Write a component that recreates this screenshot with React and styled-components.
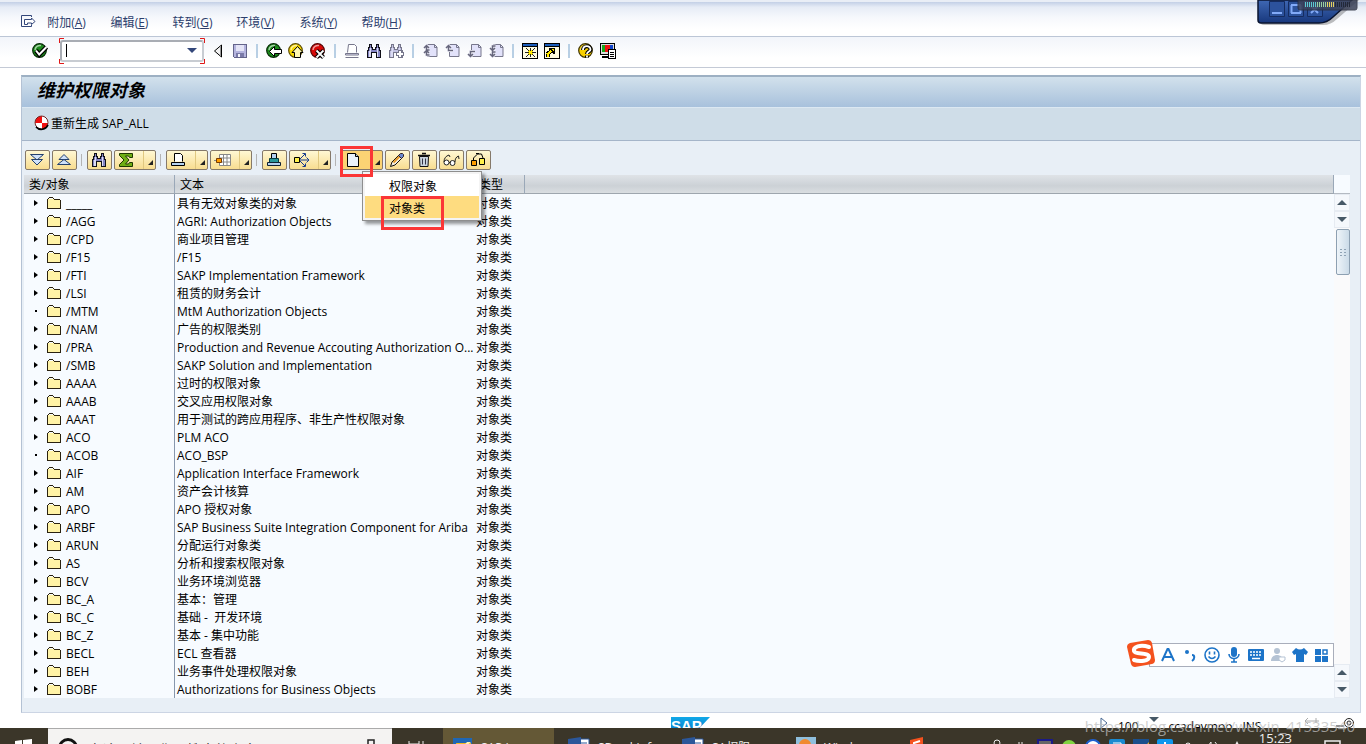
import React, { useState } from 'react'
import styled, { createGlobalStyle } from 'styled-components'

const treeData = [
  { id: '_____', text: '具有无效对象类的对象' },
  { id: '/AGG', text: 'AGRI: Authorization Objects' },
  { id: '/CPD', text: '商业项目管理' },
  { id: '/F15', text: '/F15' },
  { id: '/FTI', text: 'SAKP Implementation Framework' },
  { id: '/LSI', text: '租赁的财务会计' },
  { id: '/MTM', text: 'MtM Authorization Objects', leaf: true },
  { id: '/NAM', text: '广告的权限类别' },
  { id: '/PRA', text: 'Production and Revenue Accouting Authorization O...' },
  { id: '/SMB', text: 'SAKP Solution and Implementation' },
  { id: 'AAAA', text: '过时的权限对象' },
  { id: 'AAAB', text: '交叉应用权限对象' },
  { id: 'AAAT', text: '用于测试的跨应用程序、非生产性权限对象' },
  { id: 'ACO', text: 'PLM ACO' },
  { id: 'ACOB', text: 'ACO_BSP', leaf: true },
  { id: 'AIF', text: 'Application Interface Framework' },
  { id: 'AM', text: '资产会计核算' },
  { id: 'APO', text: 'APO 授权对象' },
  { id: 'ARBF', text: 'SAP Business Suite Integration Component for Ariba' },
  { id: 'ARUN', text: '分配运行对象类' },
  { id: 'AS', text: '分析和搜索权限对象' },
  { id: 'BCV', text: '业务环境浏览器' },
  { id: 'BC_A', text: '基本：管理' },
  { id: 'BC_C', text: '基础 -  开发环境' },
  { id: 'BC_Z', text: '基本 - 集中功能' },
  { id: 'BECL', text: 'ECL 查看器' },
  { id: 'BEH', text: '业务事件处理权限对象' },
  { id: 'BOBF', text: 'Authorizations for Business Objects' },
]

const menuItems = [
  { title: '附加', hot: 'A' },
  { title: '编辑', hot: 'E' },
  { title: '转到', hot: 'G' },
  { title: '环境', hot: 'V' },
  { title: '系统', hot: 'Y' },
  { title: '帮助', hot: 'H' },
]

const Svg = ({ w = 16, h = 16, children, ...rest }) => (
  <svg width={w} height={h} viewBox={`0 0 ${w} ${h}`} fill="none" aria-hidden="true" {...rest}>
    {children}
  </svg>
)

const Ball = ({ fill, dark, children }) => (
  <Svg>
    <circle cx="7.500" cy="7.500" r="6.800" fill={fill} stroke={dark} strokeWidth="1.200" />
    <path d="M3 7A5 5 0 0 1 9 2.500" stroke="#fff" strokeOpacity=".6" strokeWidth="1.500" />
    {children}
  </Svg>
)

const CheckIcon = () => (
  <Ball fill="#1c8a1c" dark="#032803">
    <path d="M4 7.500l3.200 4L14.500 4" stroke="#000" strokeWidth="4.500" />
    <path d="M4 7.500l3.200 4L14.500 4" stroke="#fff" strokeWidth="2" />
  </Ball>
)
const BackIcon = () => (
  <Ball fill="#1c8a1c" dark="#032803">
    <path d="M3.500 8.500l5-5V6.500h7v4h-7v3z" fill="#fff" stroke="#000" />
  </Ball>
)
const ExitIcon = () => (
  <Ball fill="#f8d800" dark="#5d4c00">
    <path d="M9.500 3.500l5.500 6h-2.500v5h-6v-5H4z" fill="#fff7b0" stroke="#000" />
  </Ball>
)
const CancelIcon = () => (
  <Ball fill="#d80808" dark="#500">
    <path d="M6.500 7.500l7 7M13.500 7.500l-7 7" stroke="#000" strokeWidth="4" />
    <path d="M6.500 7.500l7 7M13.500 7.500l-7 7" stroke="#fff" strokeWidth="1.800" />
  </Ball>
)
const HelpIcon = () => (
  <Ball fill="#f8d000" dark="#3d3200">
    <path d="M5 7c0-5 7.500-5 7.500-.5 0 2-3.500 2-3.500 4.500M9 12.500v2" stroke="#000" strokeWidth="4" />
    <path d="M5 7c0-5 7.500-5 7.500-.5 0 2-3.500 2-3.500 4.500M9 12.500v2" stroke="#fff" strokeWidth="1.800" />
  </Ball>
)
const PrevIcon = () => (
  <Svg>
    <path d="M11.500 2v12L4.500 8z" fill="#f2f2f2" stroke="#000" />
    <path d="M10.500 4v8" stroke="#999" />
  </Svg>
)
const SaveIcon = () => (
  <Svg shapeRendering="crispEdges">
    <path d="M1.500 1.500h13v13h-12l-1-1z" fill="#b4b4de" stroke="#63638a" />
    <path d="M4 2h8v6H4z" fill="#e4e4f6" />
    <path d="M4 10h8v4H4z" fill="#7a7aa8" />
    <path d="M6 11h2v3H6z" fill="#f3f3fb" />
  </Svg>
)
const PrintIcon = () => (
  <Svg>
    <path d="M3.500 9.500l1-8h6l2 2v6" fill="#fff" stroke="#77778c" />
    <path d="M1.500 10.500h13v1.500h-13z" fill="#e6e6f8" stroke="#77778c" />
    <path d="M1.500 14.500h13" stroke="#77778c" />
  </Svg>
)
const FindIcon = ({ c = '#101018', f = '#8585c4', plus }) => (
  <Svg shapeRendering="crispEdges">
    <path
      d="M3.500 1.500h2v3h1v2h3v-2h1v-3h2v3h1v3h1v7h-4v-5h-5v5h-4v-7h1v-3h1z"
      fill={f}
      stroke={c}
    />
    <path d="M4 5h1v9H3V8h1zM12 5h-1v9h1z" fill="#dcdcf4" />
    {plus && <path d="M10.500 7.500h3v2h2v3h-2v2h-3v-2h-2v-3h2z" fill="#fff" stroke={c} />}
  </Svg>
)
const PageIcon = ({ arrow }) => (
  <Svg>
    <path d="M5.500 1.500h7l2.500 2.500v9.500H5.500z" fill="#e2e2fa" stroke="#77778c" />
    <path d="M12.500 1.500v3H15" stroke="#77778c" />
    <path d={arrow} stroke="#f4f4fc" strokeWidth="3" />
    <path d={arrow} stroke="#66667c" strokeWidth="1.500" />
  </Svg>
)
const SessionIcon = ({ link }) => (
  <Svg shapeRendering="crispEdges">
    <path d="M0 0h16v16H0z" fill="#000" />
    <path d="M1 1h14v2H1z" fill="#1c5dbb" />
    <path d="M1 4h14v11H1z" fill="#fffce0" />
    {link ? (
      <>
        <path d="M3.500 14v-3l4-3" stroke="#000" strokeWidth="4" />
        <path d="M5 5h6v6H9L5 7z" fill="#000" />
        <path d="M3.500 14v-3l4-3" stroke="#ffe800" strokeWidth="2" />
        <path d="M7 6h3v3z" fill="#ffe800" />
      </>
    ) : (
      <>
        <path d="M6 7h5v5H6z" fill="#ffe800" />
        <path d="M8.500 5v3M8.500 11v3M3 9.500h4M10 9.500h4M4 5l3 3M13 5l-3 3M4 14l3-3M13 14l-3-3" stroke="#222" />
      </>
    )}
  </Svg>
)
const LayoutIcon = () => (
  <Svg shapeRendering="crispEdges">
    <path d="M.5.500h14v11H.5zM2.500 13.500h11v1h-11z" fill="#ddd" stroke="#000" />
    <path d="M2 2h4v7H2z" fill="#18a818" />
    <path d="M5 2h5v7H5z" fill="#e11" />
    <path d="M10 2h3v5h-3z" fill="#14c" />
    <path d="M8.500 6.500h7v9h-7z" fill="#fff" stroke="#000" />
    <path d="M10 9.500h4M10 11.500h4M10 13.500h4" stroke="#000" />
  </Svg>
)
const MenuIcon = () => (
  <Svg>
    <path d="M11.500 3V1.500h-10v11h10V11" stroke="#33477a" />
    <path d="M4.500 5.500h7V4l3.500 3.500-3.500 3V9h-4v1.500h-3z" fill="#fff" stroke="#33477a" />
  </Svg>
)
const GenerateIcon = () => (
  <Svg>
    <circle cx="7.500" cy="7.500" r="7" fill="#fff" />
    <path d="M8 8V1a7 7 0 0 0-7 7zM8 8v6.500a7 7 0 0 0 6-6.500z" fill="#f01010" />
    <circle cx="7.500" cy="7.500" r="6.500" stroke="#6b2020" />
    <path d="M2 12a7.200 7.200 0 0 0 12-2" stroke="#000" strokeWidth="1.600" />
  </Svg>
)
const ExpandIcon = () => (
  <Svg>
    <path d="M1.500 2.500h13L8 8z" fill="#cfe1fa" stroke="#24406c" />
    <path d="M2.500 7.500h11L8 13z" fill="#cfe1fa" stroke="#24406c" />
  </Svg>
)
const CollapseIcon = () => (
  <Svg>
    <path d="M8 2.500l5 5H3z" fill="#cfe1fa" stroke="#24406c" />
    <path d="M8 7.500l6.500 5h-13z" fill="#cfe1fa" stroke="#24406c" />
  </Svg>
)
const SumIcon = () => (
  <Svg>
    <path d="M1.500 1.500h13v4h-3l-1-1.500h-3l3.500 4-3.500 4h3l1-1.500h3v4h-13v-2l4.500-4.500-4.500-4.500z" fill="#6fae14" stroke="#1d3a00" />
  </Svg>
)
const PrinterIcon = () => (
  <Svg>
    <path d="M4.500 9.500v-8h6l2 2v6" fill="#fff" stroke="#000" />
    <path d="M1.500 10.500h13v3h-13z" fill="#b5d2f0" stroke="#000" />
  </Svg>
)
const GridIcon = () => (
  <Svg w={18}>
    <path d="M5.500 2.500h11v11h-11zM5.500 6h11M5.500 10h11M9.500 2.500v11M13 2.500v11" fill="#fff" stroke="#888" />
    <path d="M2.500 6.500h5v4h-5z" fill="#ff9d00" stroke="#7a3b00" />
    <path d="M0 8.500h2" stroke="#888" />
  </Svg>
)
const StampIcon = () => (
  <Svg>
    <path d="M5.500 1.500h5v5h-5z" fill="#b5d2f0" stroke="#000" />
    <path d="M3.500 6.500h9v4h-9z" fill="#29979a" stroke="#053c40" />
    <path d="M1.500 10.500h13v3h-13z" fill="#b5d2f0" stroke="#123" />
  </Svg>
)
const SpreadIcon = () => (
  <Svg w={18}>
    <path d="M1.500 5.500h5v5h-5z" fill="#fff04a" stroke="#000" />
    <path d="M7 8h9M7 7l5-5M7 9l5 5" stroke="#173a8c" />
    <path d="M13.500 5.500L16 8l-2.500 2.500M9.500 1.500h3v3M9.500 14.500h3v-3" stroke="#173a8c" />
  </Svg>
)
const NewIcon = () => (
  <Svg>
    <path d="M2.500 1.500h8l3 3v10h-11z" fill="#eaf2fb" stroke="#000" />
    <path d="M10.500 1.500v3h3" stroke="#000" fill="#bcd" />
  </Svg>
)
const PencilIcon = () => (
  <Svg>
    <path d="M1.500 14.500l1.500-4.500 7.500-7.500 3 3L6 13z" fill="#f6efe0" stroke="#111" />
    <path d="M4.500 10.500l6-6" stroke="#e79a28" strokeWidth="2" />
    <path d="M9.500 3.500l3 3 2-2v-2l-1-1h-2z" fill="#6a88d0" stroke="#322" />
  </Svg>
)
const TrashIcon = () => (
  <Svg>
    <path d="M3.500 4.500h9l-.5 10H4z" fill="#c8d3de" stroke="#111" />
    <path d="M2 3.500h12M6 1.500h4" stroke="#111" strokeWidth="1.400" />
    <path d="M6.500 6.500v6M9.500 6.500v6" stroke="#334" />
  </Svg>
)
const GlassesIcon = () => (
  <Svg w={18}>
    <circle cx="4.500" cy="10.500" r="2.500" fill="#fff" stroke="#222" />
    <circle cx="10.500" cy="11" r="2.500" fill="#fff" stroke="#222" />
    <path d="M2 10c0-4 2-6 5-7l1 2M13 10c0-3 1-5 3.500-6l.5 3M7 10.500h1.500" stroke="#222" />
  </Svg>
)
const WhereUsedIcon = () => (
  <Svg w={18}>
    <path d="M4.500 8V6l4-4h4l1.500 4M7 1.500h3" stroke="#000" />
    <path d="M2.500 8.500h5v5h-5z" fill="#ff9d00" stroke="#000" />
    <path d="M10.500 6.500h5v6h-5z" fill="#fff04a" stroke="#000" />
  </Svg>
)
const FolderIcon = () => (
  <Svg w={15} h={12} shapeRendering="crispEdges">
    <path d="M1 2h6v1h6v8H1z" fill="#fff3a6" />
    <path d="M0 2h1v9H0zM1 1h1v1H1zM2 0h4v1H2zM6 1h1v1H6zM7 2h6v1H7zM13 3h1v8h-1zM0 11h14v1H0z" fill="#2a2210" />
  </Svg>
)
const Triangle = ({ up }) => (
  <Svg w={10} h={6}>
    <path d={up ? 'M5 0l5 5H0z' : 'M0 0h10L5 5z'} fill="#465866" />
  </Svg>
)
const SogouLogo = () => (
  <Svg w={30} h={30}>
    <path d="M4 4l18-3q3 0 4 3l3 17q0 3-3 4L9 28q-3 0-4-3L1 8q0-3 3-4z" fill="#f4521e" />
    <path
      d="M23 8C14 5 7 8 8 12c1 4 15 1 15 6 0 4-9 5-15 3"
      stroke="#fff"
      strokeWidth="4"
      strokeLinecap="round"
    />
  </Svg>
)

const Toolbar = () => (
  <StandardBar>
    <IconButton aria-label="回车"><CheckIcon /></IconButton>
    <CommandBox>
      <CommandInput aria-label="命令字段" />
      <Caret />
      <CommandArrow aria-label="历史记录">
        <Svg w={10} h={6}><path d="M0 0h10L5 5z" fill="#33477a" /></Svg>
      </CommandArrow>
      <Corners viewBox="0 0 146 26" preserveAspectRatio="none" aria-hidden="true">
        <path d="M.5 5V.5H5M141 .5h4.500V5M145.500 21v4.500H141M5 25.500H.5V21" fill="none" stroke="#e01818" />
      </Corners>
    </CommandBox>
    <IconButton aria-label="收起"><PrevIcon /></IconButton>
    <IconButton aria-label="保存"><SaveIcon /></IconButton>
    <BarLine />
    <IconButton aria-label="返回"><BackIcon /></IconButton>
    <IconButton aria-label="退出"><ExitIcon /></IconButton>
    <IconButton aria-label="取消"><CancelIcon /></IconButton>
    <BarLine />
    <IconButton aria-label="打印"><PrintIcon /></IconButton>
    <IconButton aria-label="查找"><FindIcon /></IconButton>
    <IconButton aria-label="查找下一个"><FindIcon c="#77778c" f="#c2c2e2" plus /></IconButton>
    <BarLine />
    <IconButton aria-label="首页"><PageIcon arrow="M7.500 7h-3V2.500M2 5l2.500-2.500L7 5M7.500 12h-3V8M2 10l2.500-2.500L7 10" /></IconButton>
    <IconButton aria-label="上一页"><PageIcon arrow="M9 7.500H4.500v-5M2 5l2.500-2.500L7 5" /></IconButton>
    <IconButton aria-label="下一页"><PageIcon arrow="M9 8.500H4.500v5M2 11l2.500 2.500L7 11" /></IconButton>
    <IconButton aria-label="末页"><PageIcon arrow="M7.500 3h-3v4.500M2 5l2.500 2.500L7 5M7.500 9h-3v4.500M2 11l2.500 2.500L7 11" /></IconButton>
    <BarLine />
    <IconButton aria-label="新建会话"><SessionIcon /></IconButton>
    <IconButton aria-label="快捷方式"><SessionIcon link /></IconButton>
    <BarLine />
    <IconButton aria-label="帮助"><HelpIcon /></IconButton>
    <IconButton aria-label="定制布局"><LayoutIcon /></IconButton>
  </StandardBar>
)

const SplitButton = ({ label, icon, active, onClick }) => (
  <AlvButton aria-label={label} $split $active={active} onClick={onClick}>
    <SplitMain>{icon}</SplitMain>
    <SplitCorner $active={active}>
      <Svg w={5} h={5}><path d="M5 0v5H0z" fill="#222" /></Svg>
    </SplitCorner>
  </AlvButton>
)

const Tree = () => (
  <TreeTable>
    <colgroup>
      <Col $w="151px" />
      <Col $w="299px" />
      <Col $w="51px" />
      <Col />
    </colgroup>
    <thead>
      <tr>
        <HeadCell>类/对象</HeadCell>
        <HeadCell>文本</HeadCell>
        <HeadCell>类型</HeadCell>
        <HeadCell />
      </tr>
    </thead>
    <tbody>
      {treeData.map((row) => (
        <tr key={row.id}>
          <Cell $line>
            <Node>
              <Svg w={6} h={8}>
                {row.leaf ? <path d="M1 3h2v2H1z" fill="#000" /> : <path d="M0 1l4 3-4 3z" fill="#000" />}
              </Svg>
              <FolderIcon />
              <NodeText>{row.id}</NodeText>
            </Node>
          </Cell>
          <Cell>{row.text}</Cell>
          <Cell>对象类</Cell>
          <Cell />
        </tr>
      ))}
    </tbody>
  </TreeTable>
)

const InputBar = () => (
  <ImeBar>
    <ImeLogo><SogouLogo /></ImeLogo>
    <Svg><path d="M2 14L7.500 2h1L14 14M4.500 10h7" stroke="#1d74c8" strokeWidth="2" /></Svg>
    <Svg><circle cx="5" cy="5" r="2" fill="#1d74c8" /><path d="M10 8c3 0 3 4 0 6" stroke="#1d74c8" strokeWidth="2" /></Svg>
    <Svg>
      <circle cx="8" cy="8" r="7" stroke="#1d74c8" strokeWidth="1.600" />
      <path d="M5.500 4.500v3M10.500 4.500v3M4.500 9.500q3.500 4 7 0" stroke="#1d74c8" strokeWidth="1.600" />
    </Svg>
    <Svg>
      <rect x="5" y="0" width="6" height="10" rx="3" fill="#1d74c8" />
      <path d="M3 7c0 6 10 6 10 0M8 11v4M5 15h6" stroke="#1d74c8" strokeWidth="1.600" />
    </Svg>
    <Svg>
      <rect x="0" y="2" width="16" height="12" rx="1" fill="#1d74c8" />
      <path d="M2 5h12M2 8h12" stroke="#fff" strokeWidth="1.500" strokeDasharray="2 1" />
      <path d="M4 11.500h8" stroke="#fff" strokeWidth="1.500" />
    </Svg>
    <Svg>
      <circle cx="7" cy="4" r="3" fill="#b5c3d4" />
      <path d="M1 14c0-8 12-8 12 0z" fill="#b5c3d4" />
      <path d="M9 10h6v3l-3 2-3-2z" fill="#fff" stroke="#b5c3d4" />
    </Svg>
    <Svg><path d="M4 1q4 3 8 0l4 4-2 3-2-1v8H4V7L2 8 0 5z" fill="#1d74c8" /></Svg>
    <Svg>
      <path d="M1 2h6v6H1zM1 9h6v6H1zM8 9h6v6H8z" fill="#1d74c8" />
      <path d="M9 3h4v4H9z" stroke="#1d74c8" strokeWidth="1.500" />
    </Svg>
  </ImeBar>
)

const WordIcon = () => (
  <Svg w={22} h={18}>
    <path d="M9 2h12v16H9z" fill="#fff" stroke="#2b579a" />
    <path d="M11 6h8M11 10h8" stroke="#2b579a" />
    <path d="M0 2l13-2v18H0z" fill="#2b579a" />
  </Svg>
)

const Taskbar = () => (
  <TaskRow>
    <StartButton aria-label="开始">
      <Svg w={18} h={18}><path d="M0 2l7-1v8H0zM8 1l9-1v9H8z" fill="#fff" /></Svg>
    </StartButton>
    <SearchBox>
      <Svg w={22} h={22}><circle cx="11" cy="11" r="8.500" stroke="#111" strokeWidth="3" /></Svg>
      <span>在这里输入你要搜索的内容</span>
      <Svg w={10} h={14}><path d="M2 2h6v12H2z" stroke="#222" strokeWidth="1.500" /></Svg>
    </SearchBox>
    <TaskView><Svg><path d="M1 1v3h10V1M15 1v5" stroke="#eee" /></Svg></TaskView>
    <Task $w="111px" $active>
      <Svg w={20} h={18}>
        <path d="M0 1h19v17H0z" fill="#1f67b5" />
        <path d="M3 6h15v12H5z" fill="#f2b723" />
        <path d="M5 15l9-10h4z" fill="#fff3b0" />
      </Svg>
      SAP Logon
    </Task>
    <Task $w="114px"><WordIcon />SD-xxl-info</Task>
    <Task $w="114px"><WordIcon />SA权限</Task>
    <Task $w="114px">
      <Svg w={20} h={18}><path d="M0 0h20v18H0z" fill="#8fbfdd" /><circle cx="9" cy="8" r="6" fill="#f08a30" /></Svg>
      Windows
    </Task>
    <Task $w="40px">
      <Svg w={14} h={18}><path d="M0 3l13-3v18H0z" fill="#f4521e" /><path d="M10 4L4 6v3h6" stroke="#fff" strokeWidth="2" /></Svg>
    </Task>
    <Tray>
      <Svg><circle cx="8" cy="4" r="3" stroke="#eee" /><path d="M2 14q6-10 12 0" stroke="#eee" /></Svg>
      <Svg><path d="M6 3v3M9 3v3" stroke="#eee" /></Svg>
      <Svg shapeRendering="crispEdges"><path d="M1 1h14v14H1z" fill="#666" stroke="#1a1a88" strokeWidth="2" /></Svg>
      <Svg><circle cx="8" cy="8" r="7" fill="#7fd440" /></Svg>
      <Svg><circle cx="8" cy="8" r="7" fill="#fff" stroke="#1d5fd0" strokeWidth="2" /></Svg>
      <Svg><rect width="16" height="16" rx="2" fill="#1a8ad0" /><path d="M4 4h8v6" stroke="#fff" /></Svg>
      <Svg><path d="M0 0h16v16H0z" fill="#1a4f8c" /><path d="M4 16L16 3v13z" fill="#d9a832" /></Svg>
      <Svg><rect width="16" height="16" rx="2" fill="#0e96ee" /><path d="M8 3v10M4 6h8" stroke="#fff" strokeWidth="2" /></Svg>
      <Svg><path d="M3 7q4-6 8 0" stroke="#eee" /></Svg>
      <Svg><path d="M3 7l3-4v8M10 3q4 4 0 8" stroke="#eee" /></Svg>
      <Svg><path d="M5 8l3-6 3 6z" fill="#eee" /></Svg>
      <Clock>15:23</Clock>
      <Svg w={18} h={16}><path d="M1 2h15v12H1z" stroke="#eee" strokeWidth="1.500" /></Svg>
    </Tray>
  </TaskRow>
)

const App = () => {
  const [open, setOpen] = useState(true)

  return (
    <Page>
      <GlobalStyle />
      <MenuBar>
        <MenuIcon />
        {menuItems.map((item) => (
          <MenuButton key={item.hot}>
            {item.title}(<u>{item.hot}</u>)
          </MenuButton>
        ))}
      </MenuBar>
      <Toolbar />
      <Frame>
        <Title>维护权限对象</Title>
        <AppBar>
          <AppButton>
            <GenerateIcon />
            重新生成 SAP_ALL
          </AppButton>
        </AppBar>
        <Content>
          <AlvBar>
            <AlvButton aria-label="展开"><ExpandIcon /></AlvButton>
            <AlvButton aria-label="折叠"><CollapseIcon /></AlvButton>
            <AlvLine />
            <AlvButton aria-label="查找"><FindIcon /></AlvButton>
            <SplitButton label="合计" icon={<SumIcon />} />
            <AlvLine />
            <SplitButton label="打印" icon={<PrinterIcon />} />
            <SplitButton label="布局" icon={<GridIcon />} />
            <AlvLine />
            <AlvButton aria-label="传输"><StampIcon /></AlvButton>
            <SplitButton label="分配" icon={<SpreadIcon />} />
            <AlvLine />
            <MenuAnchor>
              <SplitButton label="创建" icon={<NewIcon />} active onClick={() => setOpen(!open)} />
              <Marker $top="-4px" $left="-1px" $w="33px" $h="31px" />
              {open && (
                <Popup>
                  <PopupItem>权限对象</PopupItem>
                  <PopupItem $selected>对象类</PopupItem>
                  <Marker $top="24px" $left="18px" $w="63px" $h="34px" />
                </Popup>
              )}
            </MenuAnchor>
            <AlvButton aria-label="更改"><PencilIcon /></AlvButton>
            <AlvButton aria-label="删除"><TrashIcon /></AlvButton>
            <AlvButton aria-label="显示"><GlassesIcon /></AlvButton>
            <AlvButton aria-label="使用清单"><WhereUsedIcon /></AlvButton>
          </AlvBar>
          <TreeArea>
            <Tree />
            <ScrollBar>
              <ScrollCorner />
              <ScrollButton aria-label="向上"><Triangle up /></ScrollButton>
              <ScrollButton aria-label="向下"><Triangle /></ScrollButton>
              <Thumb>
                <Svg w={6} h={8} shapeRendering="crispEdges">
                  <path d="M0 1h2M4 1h2M0 4h2M4 4h2M0 7h2M4 7h2" stroke="#8fa3b5" />
                </Svg>
              </Thumb>
              <Track />
              <ScrollButton aria-label="向上翻"><Triangle up /></ScrollButton>
              <ScrollButton aria-label="向下翻"><Triangle /></ScrollButton>
            </ScrollBar>
            <InputBar />
          </TreeArea>
        </Content>
      </Frame>
      <StatusBar>
        <SapLogo>
          <Svg w={40} h={20}>
            <defs>
              <linearGradient id="sap" x1="0" y1="0" x2="0" y2="1">
                <stop offset="0" stopColor="#10a8e8" />
                <stop offset="1" stopColor="#0b6fc0" />
              </linearGradient>
            </defs>
            <path d="M0 0h39L20 20H0z" fill="url(#sap)" />
            <text x="0" y="14" fontFamily="Liberation Sans" fontWeight="700" fontSize="15" fill="#fff">SAP</text>
          </Svg>
        </SapLogo>
        <StatusInfo>
          <Svg w={8} h={12}><path d="M1 1v10l6-5z" stroke="#4a6a94" /></Svg>
          <span>100</span>
          <Triangle />
          <span>ccadevmoo</span>
          <span>INS</span>
        </StatusInfo>
        <StatusTail>
          <Svg w={18} h={10}><path d="M1 4h14M4 1L1 4l3 3M12 1v5" stroke="#aaa" /></Svg>
          <Svg w={20} h={12}><path d="M1 9h8" stroke="#222" /><circle cx="14" cy="6" r="4.500" stroke="#222" /><circle cx="14" cy="6" r="2" stroke="#222" /></Svg>
        </StatusTail>
      </StatusBar>
      <Taskbar />
      <Watermark>https://blog.csdn.net/weixin_41533540</Watermark>
      <Recorder>
        <Svg w={110} h={30}>
          <defs>
            <linearGradient id="rec" x1="0" y1="0" x2="0" y2="1">
              <stop offset="0" stopColor="#3f68b4" />
              <stop offset="1" stopColor="#17377c" />
            </linearGradient>
          </defs>
          <path d="M4 0v21q0 4 4 4h59q8 0 14-6L103 0z" fill="#000" opacity=".25" />
          <path d="M2 0v20q0 3 3 3h58q8 0 14-6L96 0z" fill="url(#rec)" stroke="#0a1430" strokeWidth="1.500" />
          <path d="M13.500 1.500h15v15h-15zM32.500 1.500h15v15h-15zM51.500 1.500h15v15h-15z" fill="#2c529c" stroke="#152c60" />
          <path d="M16 13h10M35 5h10M35.500 5v8M35 13h10M44.500 5v8M55 13l7-7M55 6l7 7" stroke="#82aaf8" strokeWidth="2" />
          <path d="M42 0h59v8q0 2-2 2H44q-2 0-2-2z" fill="#3c4258" opacity=".85" stroke="#2a2e3e" />
          <path d="M49 4.500h46" stroke="#222838" strokeWidth="5" strokeDasharray="1 1" />
          <path d="M49 4.500h12" stroke="#5cc9d0" strokeWidth="5" strokeDasharray="1 1" />
          <path d="M61 4.500h10" stroke="#98d0a0" strokeWidth="5" strokeDasharray="1 1" />
          <path d="M71 4.500h8" stroke="#e4d060" strokeWidth="5" strokeDasharray="1 1" />
        </Svg>
      </Recorder>
    </Page>
  )
}

export default App

const GlobalStyle = createGlobalStyle`
  * {
    box-sizing: border-box;
  }
  body {
    margin: 0;
    font-family: "Open Sans", "Noto Sans CJK SC", sans-serif;
    font-size: 12px;
    color: #000;
    background: #fff;
  }
  button, input {
    font: inherit;
    color: inherit;
  }
  button {
    display: flex;
    align-items: center;
    justify-content: center;
    padding: 0;
    border: none;
    background: none;
    white-space: nowrap;
  }
  svg {
    display: block;
    flex: none;
  }
`
const Page = styled.div`
  position: relative;
  display: flex;
  flex-direction: column;
  height: 100vh;
  overflow: hidden;
`
const MenuBar = styled.nav`
  flex: none;
  display: flex;
  align-items: center;
  gap: 20px;
  height: 37px;
  padding: 6px 20px 0;
  border-top: 2px solid #e9eef6;
  border-bottom: 1px solid #bcc6d6;
  background: linear-gradient(#c3d0e6, #e6ecf6 15%, #f6f8fc 45%, #fff 80%);

  svg {
    margin-right: -11px;
  }
`
const MenuButton = styled.button`
  width: 43px;
  color: #2c3e6c;
`
const StandardBar = styled.div`
  flex: none;
  display: flex;
  align-items: center;
  gap: 6px;
  height: 31px;
  padding: 0 32px 2px;
  border-bottom: 1px solid #c4cad6;
  background: linear-gradient(#f2f5fa, #fff 70%);
`
const IconButton = styled.button`
  width: 16px;
  height: 16px;
`
const BarLine = styled.span`
  width: 6px;
  height: 14px;
  background: linear-gradient(90deg, transparent 2px, #b8cfe4 2px, #b8cfe4 4px, transparent 4px);
`
const CommandBox = styled.div`
  position: relative;
  display: flex;
  align-items: center;
  width: 144px;
  height: 24px;
  margin-left: 6px;
`
const CommandInput = styled.input`
  width: 100%;
  height: 22px;
  padding: 0 20px 0 6px;
  border: 2px solid #a9adb4;
  border-right-color: #c8ccd2;
  border-bottom-color: #c8ccd2;
  border-radius: 3px;
  background: #fff;
  outline: none;
`
const Caret = styled.span`
  position: absolute;
  left: 6px;
  top: 5px;
  width: 1px;
  height: 13px;
  background: #000;
`
const CommandArrow = styled.button`
  position: absolute;
  right: 6px;
  top: 5px;
  width: 12px;
  height: 14px;
`
const Corners = styled.svg`
  position: absolute;
  inset: -1px;
  width: 146px;
  height: 26px;
  pointer-events: none;
`
const Frame = styled.main`
  flex: none;
  margin: 7px 5px 0 21px;
  border: 1px solid #ccd5e4;
  border-top: 2px solid #9db0c3;
  border-left-color: #b4c2d4;
`
const Title = styled.h1`
  margin: 0;
  height: 31px;
  padding-left: 15px;
  border-bottom: 1px solid #dce8f2;
  background: linear-gradient(#d2e1ec, #a8c1dc);
  font-size: 18px;
  font-style: italic;
  font-weight: 700;
  line-height: 26px;
`
const AppBar = styled.div`
  display: flex;
  align-items: center;
  height: 33px;
  padding: 0 12px 2px;
  border-bottom: 1px solid #a5b5c9;
  background: #cfdde8;
`
const AppButton = styled.button`
  gap: 1px;
`
const Content = styled.section`
  padding: 9px 10px 14px 2px;
  background: #e8eff6;
`
const AlvBar = styled.div`
  display: flex;
  gap: 2px;
  height: 25px;
  padding-left: 1px;
`
const AlvButton = styled.button`
  width: ${({ $split }) => ($split ? '42px' : '25px')};
  height: 20px;
  padding-right: ${({ $split }) => ($split ? '0' : '1px')};
  border: 1px solid #85796a;
  border-radius: 2px;
  background: ${({ $active }) => ($active ? '#fbd374' : 'linear-gradient(#fff8d4, #f8dd90)')};
`
const SplitMain = styled.span`
  flex: 1;
  padding-left: 3px;
`
const SplitCorner = styled.span`
  display: flex;
  align-items: flex-end;
  width: 12px;
  height: 18px;
  padding: 0 0 4px 4px;
  border-left: 1px solid ${({ $active }) => ($active ? '#d9ab48' : '#e0c880')};
`
const AlvLine = styled.span`
  width: 6px;
  height: 12px;
  margin-top: 4px;
  background: linear-gradient(90deg, transparent 2px, #b4b4b4 2px, #b4b4b4 3px, transparent 3px);
`
const MenuAnchor = styled.div`
  position: relative;
`
const Marker = styled.div`
  position: absolute;
  z-index: 3;
  top: ${({ $top }) => $top};
  left: ${({ $left }) => $left};
  width: ${({ $w }) => $w};
  height: ${({ $h }) => $h};
  border: 3px solid #fb3636;
  pointer-events: none;
`
const Popup = styled.div`
  position: absolute;
  z-index: 2;
  top: 21px;
  left: 21px;
  width: 120px;
  padding: 2px;
  border: 1px solid #8e8e8e;
  background: #f4f4f4;
  box-shadow: 3px 3px 3px rgba(0, 0, 0, 0.4);
`
const PopupItem = styled.button`
  width: 100%;
  height: 22px;
  padding: 1px 0 0 24px;
  justify-content: flex-start;
  background: ${({ $selected }) => ($selected ? '#fedc80' : '#fff')};
`
const TreeArea = styled.div`
  position: relative;
  display: flex;
`
const TreeTable = styled.table`
  flex: 1;
  table-layout: fixed;
  width: 100%;
  border-collapse: separate;
  border-spacing: 0;
  background: #f7fbff;
`
const Col = styled.col`
  width: ${({ $w }) => $w || 'auto'};
`
const HeadCell = styled.th`
  height: 19px;
  padding: 2px 5px 0;
  border-right: 1px solid #9aa8b8;
  border-bottom: 1px solid #9ea6ae;
  background: linear-gradient(#dfe3e7, #ccd1d6 60%, #dadee1);
  font-weight: 400;
  line-height: 16px;
  text-align: left;
  white-space: nowrap;

  &:nth-child(2) {
    border-right-color: transparent;
  }
`
const Cell = styled.td`
  height: 18px;
  padding: ${({ $line }) => ($line ? '0 2px' : '2px 2px 0')};
  border-right: ${({ $line }) => ($line ? '1px solid #8797ad' : 'none')};
  line-height: 16px;
  white-space: pre;
`
const Node = styled.div`
  display: flex;
  align-items: center;
  height: 18px;
  padding-left: 8px;

  svg + svg {
    margin: 0 4px 0 7px;
  }
`
const NodeText = styled.span`
  padding-top: 2px;
`
const ScrollBar = styled.div`
  display: flex;
  flex-direction: column;
  width: 16px;
  background: #fafafb;
`
const ScrollCorner = styled.div`
  height: 19px;
  border-bottom: 1px solid #b4bac2;
  background: #f7fbff;
`
const ScrollButton = styled.button`
  height: 17px;
  border: 1px solid #e6ebf2;
  background: #f5f8fc;
`
const Thumb = styled.div`
  display: flex;
  align-items: center;
  justify-content: center;
  height: 46px;
  margin: 1px 0 0 2px;
  border: 1px solid #8da0b2;
  border-radius: 2px;
  background: linear-gradient(90deg, #eef4f9, #cbdbe8);
`
const Track = styled.div`
  flex: 1;
`
const ImeBar = styled.div`
  position: absolute;
  right: 16px;
  bottom: 31px;
  display: flex;
  align-items: center;
  gap: 6px;
  height: 24px;
  padding: 0 3px 0 10px;
  border: 1px solid #a9aebb;
  background: #fff;
`
const ImeLogo = styled.div`
  position: absolute;
  left: -24px;
  top: -5px;
`
const StatusBar = styled.footer`
  flex: none;
  display: flex;
  justify-content: flex-end;
  height: 15px;
  padding-top: 4px;
  overflow: hidden;
`
const SapLogo = styled.div`
  margin-right: 389px;
`
const StatusInfo = styled.div`
  display: flex;
  align-items: flex-start;
  gap: 10px;
  width: 204px;
  line-height: 20px;
`
const StatusTail = styled.div`
  display: flex;
  gap: 13px;
  width: 62px;
`
const TaskRow = styled.div`
  flex: none;
  display: flex;
  height: 40px;
  background: #3b3629;
  color: #eee;
`
const StartButton = styled.button`
  flex: none;
  width: 48px;
  align-items: flex-start;
  padding-top: 11px;
`
const SearchBox = styled.div`
  flex: none;
  display: flex;
  align-items: flex-start;
  gap: 10px;
  width: 344px;
  padding: 8px 16px 0 9px;
  border-top: 1px solid #aaa;
  background: #f4f3f2;
  color: #333;
  font-size: 14px;
  line-height: 26px;

  svg + span + svg {
    margin-top: 1px;
  }

  span {
    flex: 1;
  }
`
const TaskView = styled.div`
  flex: none;
  width: 51px;
  padding: 12px 0 0 16px;
`
const Task = styled.button`
  flex: none;
  align-items: flex-start;
  justify-content: flex-start;
  gap: 8px;
  width: ${({ $w }) => $w};
  padding: 9px 0 0 ${({ $active }) => ($active ? '10px' : '14px')};
  background: ${({ $active }) => ($active ? '#645836' : 'transparent')};
  line-height: 22px;
`
const Tray = styled.div`
  flex: none;
  display: flex;
  gap: 8px;
  margin-left: auto;
  padding: 11px 24px 0 0;
`
const Clock = styled.span`
  margin: -11px 24px 0 6px;
  font-size: 13px;
  line-height: 20px;
`
const Watermark = styled.div`
  position: absolute;
  right: 11px;
  bottom: 8px;
  color: rgba(190, 190, 190, 0.75);
  font-size: 15px;
  line-height: 20px;
`
const Recorder = styled.div`
  position: absolute;
  top: 0;
  right: 0;
`
